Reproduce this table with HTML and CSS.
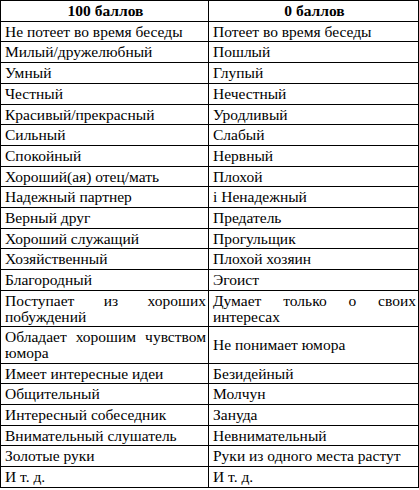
FILE: index.html
```html
<!DOCTYPE html>
<html lang="ru">
<head>
<meta charset="utf-8">
<title>Таблица баллов</title>
<link rel="stylesheet" href="styles.css">
</head>
<body>
<table class="score-table">
  <colgroup>
    <col class="col-left">
    <col class="col-right">
  </colgroup>
  <thead>
    <tr>
      <th>100 баллов</th>
      <th>0 баллов</th>
    </tr>
  </thead>
  <tbody>
    <tr><td>Не потеет во время беседы</td><td>Потеет во время беседы</td></tr>
    <tr><td>Милый/дружелюбный</td><td>Пошлый</td></tr>
    <tr><td>Умный</td><td>Глупый</td></tr>
    <tr><td>Честный</td><td>Нечестный</td></tr>
    <tr><td>Красивый/прекрасный</td><td>Уродливый</td></tr>
    <tr><td>Сильный</td><td>Слабый</td></tr>
    <tr><td>Спокойный</td><td>Нервный</td></tr>
    <tr><td>Хороший(ая) отец/мать</td><td>Плохой</td></tr>
    <tr><td>Надежный партнер</td><td>i Ненадежный</td></tr>
    <tr><td>Верный друг</td><td>Предатель</td></tr>
    <tr><td>Хороший служащий</td><td>Прогульщик</td></tr>
    <tr><td>Хозяйственный</td><td>Плохой хозяин</td></tr>
    <tr><td>Благородный</td><td>Эгоист</td></tr>
    <tr><td>Поступает из хороших побуждений</td><td>Думает только о своих интересах</td></tr>
    <tr><td>Обладает хорошим чувством юмора</td><td>Не понимает юмора</td></tr>
    <tr><td>Имеет интересные идеи</td><td>Безидейный</td></tr>
    <tr><td>Общительный</td><td>Молчун</td></tr>
    <tr><td>Интересный собеседник</td><td>Зануда</td></tr>
    <tr><td>Внимательный слушатель</td><td>Невнимательный</td></tr>
    <tr><td>Золотые руки</td><td>Руки из одного места растут</td></tr>
    <tr><td>И т. д.</td><td>И т. д.</td></tr>
  </tbody>
</table>
</body>
</html>
```

FILE: styles.css
```css
html, body {
  margin: 0;
  padding: 0;
  background: #ffffff;
}

.score-table {
  border-collapse: collapse;
  table-layout: fixed;
  width: 418px;
  font-family: "Liberation Serif", "Times New Roman", serif;
  font-size: 15.5px;
  color: #000000;
}

.col-left {
  width: 208px;
}

.col-right {
  width: 210px;
}

.score-table th,
.score-table td {
  border: 1px solid #000000;
  padding: 2px 2px 2px 4px;
  line-height: 15.7px;
  vertical-align: middle;
}

.score-table th {
  font-weight: bold;
  text-align: center;
  padding-top: 2px;
  padding-bottom: 2px;
}

.score-table td {
  text-align: justify;
}
```
